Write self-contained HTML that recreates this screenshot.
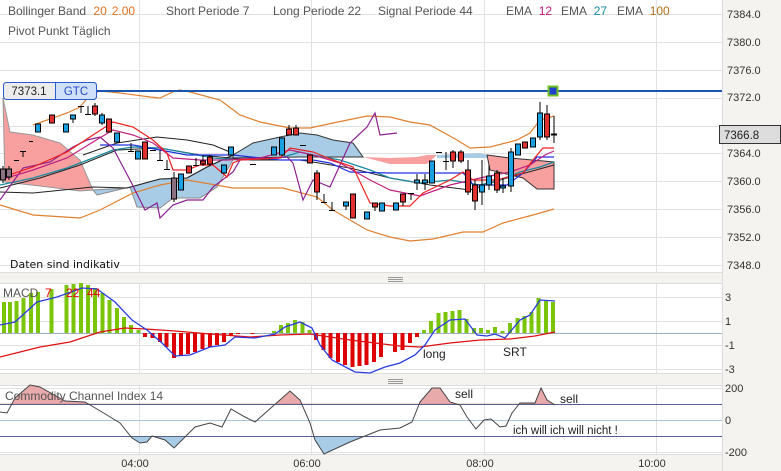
<!DOCTYPE html>
<html><head><meta charset="utf-8"><style>
html,body{margin:0;padding:0;background:#f4f3ef;}
svg{display:block;font-family:"Liberation Sans",sans-serif;}
</style></head><body>
<svg width="781" height="471" viewBox="0 0 781 471" xmlns="http://www.w3.org/2000/svg">
<defs>
<clipPath id="above"><rect x="0" y="384" width="722" height="20"/></clipPath>
<clipPath id="below"><rect x="0" y="436" width="722" height="20"/></clipPath>
</defs>
<rect width="781" height="471" fill="#f4f3ef"/>
<!-- panels -->
<rect x="0" y="0" width="722" height="272" fill="#fff"/>
<rect x="0" y="283" width="722" height="90" fill="#fff"/>
<rect x="0" y="385" width="722" height="69" fill="#fff"/>
<g stroke="#e2e2e2" stroke-width="1">
<line x1="0" x2="722" y1="14.5" y2="14.5"/><line x1="0" x2="722" y1="42.5" y2="42.5"/><line x1="0" x2="722" y1="70.5" y2="70.5"/><line x1="0" x2="722" y1="98.5" y2="98.5"/><line x1="0" x2="722" y1="126.5" y2="126.5"/><line x1="0" x2="722" y1="153.5" y2="153.5"/><line x1="0" x2="722" y1="181.5" y2="181.5"/><line x1="0" x2="722" y1="209.5" y2="209.5"/><line x1="0" x2="722" y1="237.5" y2="237.5"/><line x1="0" x2="722" y1="265.5" y2="265.5"/>
<line x1="0" x2="722" y1="297.5" y2="297.5"/><line x1="0" x2="722" y1="321.5" y2="321.5"/><line x1="0" x2="722" y1="345.5" y2="345.5"/><line x1="0" x2="722" y1="369.5" y2="369.5"/>
<line x1="0" x2="722" y1="388.5" y2="388.5"/><line x1="0" x2="722" y1="452.5" y2="452.5"/>
<line x1="139.5" x2="139.5" y1="0" y2="454"/><line x1="311.5" x2="311.5" y1="0" y2="454"/><line x1="484.5" x2="484.5" y1="0" y2="454"/><line x1="656.5" x2="656.5" y1="0" y2="454"/>
</g>
<rect x="0" y="272" width="722" height="11" fill="#f4f3ef"/>
<rect x="0" y="373" width="722" height="12" fill="#f4f3ef"/>
<line x1="0" x2="722" y1="272.5" y2="272.5" stroke="#ddd"/>
<line x1="0" x2="722" y1="283.5" y2="283.5" stroke="#ddd"/>
<line x1="0" x2="722" y1="373.5" y2="373.5" stroke="#ddd"/>
<line x1="0" x2="722" y1="385.5" y2="385.5" stroke="#ddd"/>
<line x1="0" x2="722" y1="454.5" y2="454.5" stroke="#ddd"/>
<line x1="722.5" x2="722.5" y1="0" y2="471" stroke="#ddd"/>
<g stroke="#999"><line x1="388" x2="403" y1="277.5" y2="277.5"/><line x1="388" x2="403" y1="279.5" y2="279.5"/><line x1="388" x2="403" y1="281.5" y2="281.5"/>
<line x1="388" x2="403" y1="379.5" y2="379.5"/><line x1="388" x2="403" y1="381.5" y2="381.5"/><line x1="388" x2="403" y1="383.5" y2="383.5"/></g>

<!-- clouds -->
<polygon points="3,98 10,132 33,135 60,143 80,160 93,190 80,191 40,186 5,182" fill="#f8a0a0" stroke="#999" stroke-width="1"/>
<polygon points="93,190 127,188 160,179 187,178 207,167 233,155 233,160 217,187 200,198 173,198 160,208 137,207 130,187 97,195" fill="#a8cbe6" stroke="#888" stroke-width="1"/>
<polygon points="233,155 253,143 280,137 300,133 317,135 333,140 353,143 363,157 300,157 233,158" fill="#a8cbe6" stroke="#333" stroke-width="1"/>
<polygon points="363,157 390,158 417,157 427,155 437,155 427,164 417,164 390,164" fill="#f8a0a0"/>
<polygon points="437,155 480,153 487,155 487,158 437,158" fill="#a8cbe6"/>
<polygon points="487,155 510,158 554,162 554,189 537,189 523,178 490,170" fill="#f8a0a0" stroke="#333" stroke-width="1"/>

<!-- bollinger -->
<g fill="none" stroke="#e08030" stroke-width="1.2">
<polyline points="33,125 67,113 80,107 90,95 100,91 120,93 150,97 160,98 175,91 180,90 190,92 220,100 240,115 260,122 290,128 310,128 333,123 367,116 390,117 410,122 430,125 457,140 470,148 490,147 517,140 530,133 540,120 554,116"/>
<polyline points="0,205 33,215 80,218 100,210 133,193 160,185 187,180 233,188 283,188 317,197 333,210 367,230 390,237 410,241 433,239 463,232 483,232 503,223 533,215 554,209"/>
</g>
<!-- black lines -->
<g fill="none" stroke="#222" stroke-width="1">
<polyline points="0,192 33,193 93,187 127,188 160,179 187,178 207,167 233,155"/>
<polyline points="83,155 117,143 157,137 187,140 213,145 230,152"/>
<polyline points="0,188 40,178 80,165 117,150 160,148 200,155 250,160 300,160 350,168 390,178 430,185 470,190 500,180 554,165"/>
</g>
<!-- EMA lines -->
<polyline fill="none" stroke="#1a8aa0" stroke-width="1.3" points="0,185 33,178 67,168 93,158 113,150 133,147 160,148 187,153 213,158 240,160 280,158 300,152 313,155 340,160 370,170 390,178 420,183 450,180 480,185 500,180 520,172 540,167 554,162"/>
<polyline fill="none" stroke="#2030e0" stroke-width="1.2" points="100,145 133,145 160,150 187,155 233,155 280,160 313,160 330,163 350,172 390,173 463,173 470,180 473,185 507,185 523,173 537,157 554,157"/>
<polyline fill="none" stroke="#8a2090" stroke-width="1.2" points="0,200 23,168 50,162 73,147 87,140 100,137 113,148 130,180 145,210 157,203 160,218 173,205 187,200 203,200 213,187 233,172 240,160 287,157 293,163 303,200 313,180 330,187 350,143 367,127 375,113 380,135 397,133"/>
<polyline fill="none" stroke="#c02080" stroke-width="1.2" points="0,180 33,170 67,158 93,142 113,130 133,135 153,143 173,158 200,160 227,160 260,158 290,150 313,155 340,163 370,180 390,190 420,196 450,185 480,178 510,172 530,165 545,155 554,151"/>
<polyline fill="none" stroke="#f02020" stroke-width="1.2" points="0,178 33,167 67,152 93,135 113,122 133,127 153,140 167,153 173,170 187,170 200,165 213,165 227,177 233,163 240,160 280,158 290,148 313,152 333,160 353,167 370,203 390,206 410,206 423,193 450,180 463,172 473,180 497,180 523,173 533,160 543,148 554,148"/>

<!-- candles -->
<g stroke="#000" stroke-width="1">
<line x1="3" x2="3" y1="166" y2="183"/><rect x="0.5" y="169" width="5" height="11" fill="#8a7080"/>
<line x1="9" x2="9" y1="166" y2="180"/><rect x="6.5" y="169" width="5" height="8" fill="#8a7080"/>
<line x1="14" x2="19" y1="160.5" y2="160.5"/>
<line x1="23" x2="23" y1="151" y2="157"/><line x1="20" x2="26" y1="151.5" y2="151.5"/>
<line x1="29" x2="33" y1="141.5" y2="141.5"/>
<rect x="35.5" y="124" width="5" height="8" fill="#1aa0e0"/>
<rect x="49.5" y="115" width="5" height="8" fill="#e03030"/>
<rect x="63.5" y="124" width="5" height="8" fill="#1aa0e0"/>
<line x1="73" x2="73" y1="115" y2="123"/><rect x="70.5" y="115" width="5" height="4" fill="#1aa0e0"/>
<line x1="81" x2="81" y1="106" y2="113"/><line x1="78" x2="84" y1="106.5" y2="106.5"/>
<line x1="88" x2="88" y1="106" y2="114"/><line x1="85" x2="91" y1="114.5" y2="114.5"/>
<line x1="95" x2="95" y1="103" y2="116"/><rect x="92.5" y="106" width="5" height="8" fill="#e03030"/>
<line x1="102" x2="102" y1="113" y2="125"/><rect x="99.5" y="115" width="5" height="8" fill="#1aa0e0"/>
<rect x="106.5" y="119" width="5" height="13" fill="#e03030"/>
<rect x="114.5" y="133" width="5" height="9" fill="#1aa0e0"/>
<line x1="131" x2="131" y1="143" y2="151"/><line x1="128" x2="134" y1="151.5" y2="151.5"/>
<rect x="135.5" y="151" width="5" height="8" fill="#1aa0e0"/>
<rect x="142.5" y="142" width="5" height="17" fill="#e03030"/>
<line x1="150" x2="156" y1="150.5" y2="150.5"/>
<line x1="160" x2="160" y1="150" y2="160"/><line x1="157" x2="163" y1="160.5" y2="160.5"/>
<line x1="167" x2="167" y1="160" y2="169"/><line x1="164" x2="170" y1="169.5" y2="169.5"/>
<line x1="174" x2="174" y1="172" y2="202"/><rect x="171.5" y="178" width="5" height="21" fill="#8a7080"/>
<rect x="178.5" y="174" width="5" height="16" fill="#1aa0e0"/>
<rect x="186.5" y="166" width="5" height="7" fill="#e03030"/>
<line x1="196" x2="196" y1="158" y2="165"/><line x1="193" x2="199" y1="165.5" y2="165.5"/>
<line x1="203" x2="203" y1="155" y2="166"/><rect x="200.5" y="161" width="5" height="3" fill="#e03030"/>
<line x1="210" x2="210" y1="155" y2="166"/><rect x="207.5" y="157" width="5" height="7" fill="#e03030"/>
<rect x="221.5" y="165" width="5" height="8" fill="#1aa0e0"/>
<rect x="228.5" y="147" width="5" height="8" fill="#1aa0e0"/>
<line x1="250" x2="256" y1="164.5" y2="164.5"/>
<rect x="271.5" y="147" width="5" height="8" fill="#1aa0e0"/>
<rect x="279.5" y="138" width="5" height="17" fill="#1aa0e0"/>
<line x1="289" x2="289" y1="125" y2="135"/><rect x="286.5" y="129" width="5" height="6" fill="#e03030"/>
<line x1="296" x2="296" y1="125" y2="135"/><rect x="293.5" y="128" width="5" height="7" fill="#e03030"/>
<line x1="300" x2="306" y1="145.5" y2="145.5"/>
<rect x="307.5" y="155" width="5" height="8" fill="#e03030"/>
<line x1="317" x2="317" y1="170" y2="200"/><rect x="314.5" y="173" width="5" height="19" fill="#e03030"/>
<line x1="324" x2="324" y1="194" y2="202"/><line x1="321" x2="327" y1="202.5" y2="202.5"/>
<line x1="332" x2="332" y1="202" y2="210"/><line x1="329" x2="335" y1="210.5" y2="210.5"/>
<line x1="346" x2="346" y1="202" y2="210"/><rect x="343.5" y="202" width="5" height="4" fill="#1aa0e0"/>
<rect x="350.5" y="194" width="5" height="24" fill="#e03030"/>
<rect x="364.5" y="212" width="5" height="7" fill="#1aa0e0"/>
<line x1="375" x2="375" y1="203" y2="211"/><rect x="372.5" y="203" width="5" height="4" fill="#e03030"/>
<rect x="379.5" y="203" width="5" height="8" fill="#1aa0e0"/>
<rect x="393.5" y="203" width="5" height="7" fill="#1aa0e0"/>
<line x1="403" x2="403" y1="194" y2="206"/><rect x="400.5" y="194" width="5" height="8" fill="#e03030"/>
<line x1="411" x2="411" y1="193" y2="200"/><line x1="408" x2="414" y1="193.5" y2="193.5"/>
<line x1="417" x2="417" y1="174" y2="190"/><rect x="414.5" y="180" width="5" height="3" fill="#1aa0e0"/>
<line x1="425" x2="425" y1="174" y2="190"/><rect x="422.5" y="180" width="5" height="3" fill="#1aa0e0"/>
<rect x="429.5" y="161" width="5" height="22" fill="#1aa0e0"/>
<line x1="436" x2="442" y1="152.5" y2="152.5"/>
<line x1="446" x2="446" y1="152" y2="170"/><line x1="443" x2="449" y1="161.5" y2="161.5"/>
<line x1="453" x2="453" y1="150" y2="168"/><rect x="450.5" y="152" width="5" height="9" fill="#e03030"/>
<line x1="461" x2="461" y1="150" y2="163"/><rect x="458.5" y="152" width="5" height="9" fill="#e03030"/>
<line x1="468" x2="468" y1="160" y2="195"/><rect x="465.5" y="170" width="5" height="22" fill="#e03030"/>
<line x1="475" x2="475" y1="180" y2="210"/><rect x="472.5" y="185" width="5" height="16" fill="#e03030"/>
<line x1="482" x2="482" y1="160" y2="205"/><rect x="479.5" y="185" width="5" height="7" fill="#1aa0e0"/>
<line x1="489" x2="489" y1="165" y2="190"/><rect x="486.5" y="176" width="5" height="9" fill="#1aa0e0"/>
<line x1="497" x2="497" y1="170" y2="193"/><rect x="494.5" y="173" width="5" height="17" fill="#e03030"/>
<line x1="503" x2="503" y1="178" y2="193"/><rect x="500.5" y="186" width="5" height="2" fill="#1aa0e0"/>
<line x1="511" x2="511" y1="148" y2="192"/><rect x="508.5" y="152" width="5" height="34" fill="#1aa0e0"/>
<rect x="515.5" y="144" width="5" height="11" fill="#1aa0e0"/>
<rect x="522.5" y="142" width="5" height="6" fill="#e03030"/>
<rect x="530.5" y="138" width="5" height="9" fill="#1aa0e0"/>
<line x1="540" x2="540" y1="102" y2="140"/><rect x="537.5" y="113" width="5" height="24" fill="#1aa0e0"/>
<line x1="547" x2="547" y1="105" y2="140"/><rect x="544.5" y="114" width="5" height="23" fill="#e03030"/>
<line x1="554" x2="554" y1="116" y2="143"/><line x1="551" x2="557" y1="134.5" y2="134.5" stroke-width="2"/>
</g>

<!-- order line -->
<line x1="97" x2="722" y1="91" y2="91" stroke="#1a56b0" stroke-width="2"/>
<rect x="548.5" y="86.5" width="9" height="9" fill="#2040d0" stroke="#70c020" stroke-width="2"/>
<rect x="3.5" y="82.5" width="93" height="17" rx="3" fill="#ececec" stroke="#2a5cd0"/>
<path d="M55.5 82.5 H93.5 a3 3 0 0 1 3 3 V96.5 a3 3 0 0 1 -3 3 H55.5 Z" fill="#cfe0fa" stroke="#2a5cd0"/>
<text x="29" y="95" font-size="11.5" fill="#222" text-anchor="middle">7373.1</text>
<text x="76" y="95" font-size="11.5" fill="#2a4cc0" text-anchor="middle">GTC</text>

<!-- header text -->
<g font-size="12" fill="#555">
<text x="8" y="15">Bollinger Band <tspan fill="#e07020" dx="4">20</tspan><tspan fill="#e07020" dx="5">2.00</tspan></text>
<text x="166" y="15">Short Periode  7</text>
<text x="273" y="15">Long Periode  22</text>
<text x="378" y="15">Signal Periode  44</text>
<text x="506" y="15">EMA <tspan fill="#c0187a" dx="4">12</tspan></text>
<text x="561" y="15">EMA <tspan fill="#1a8aa0" dx="4">27</tspan></text>
<text x="617" y="15">EMA <tspan fill="#b0701a" dx="4">100</tspan></text>
<text x="8" y="35">Pivot Punkt  Täglich</text>
</g>
<text x="10" y="268" font-size="11" fill="#111" font-family="DejaVu Sans,sans-serif">Daten sind indikativ</text>

<!-- price axis -->
<g font-size="11" fill="#333">
<text x="727" y="18">7384.0</text><text x="727" y="46">7380.0</text><text x="727" y="74">7376.0</text><text x="727" y="101">7372.0</text>
<text x="727" y="157">7364.0</text><text x="727" y="185">7360.0</text><text x="727" y="213">7356.0</text><text x="727" y="241">7352.0</text><text x="727" y="269">7348.0</text>
</g>
<rect x="719.5" y="125.5" width="61" height="18" fill="#ddd" stroke="#333"/>
<text x="724" y="139" font-size="11.5" fill="#222">7366.8</text>

<!-- MACD -->
<line x1="0" x2="722" y1="333.5" y2="333.5" stroke="#9ab0c0"/>
<g fill="#7ac40a">
<rect x="2" y="302" width="4" height="31"/><rect x="8" y="302" width="4" height="31"/><rect x="14.5" y="301" width="4" height="32"/><rect x="21.5" y="298" width="4" height="35"/><rect x="29" y="293" width="4" height="40"/><rect x="36" y="292" width="4" height="41"/><rect x="49.5" y="289" width="4" height="44"/><rect x="64.5" y="285" width="4" height="48"/><rect x="71.5" y="284" width="4" height="49"/><rect x="79" y="283" width="4" height="50"/><rect x="86" y="285" width="4" height="48"/><rect x="93" y="288" width="4" height="45"/><rect x="100.5" y="293" width="4" height="40"/><rect x="107.5" y="300" width="4" height="33"/><rect x="115" y="308" width="4" height="25"/><rect x="122" y="317" width="4" height="16"/><rect x="129" y="325" width="4" height="8"/><rect x="136.5" y="330" width="4" height="3"/>
<rect x="272" y="331" width="4" height="2"/><rect x="279" y="325" width="4" height="8"/><rect x="286" y="323" width="4" height="10"/><rect x="293" y="320" width="4" height="13"/><rect x="300.5" y="322" width="4" height="11"/><rect x="307.5" y="330" width="4" height="3"/>
<rect x="422" y="330" width="4" height="3"/><rect x="429" y="321" width="4" height="12"/><rect x="436.5" y="313" width="4" height="20"/><rect x="443.5" y="312" width="4" height="21"/><rect x="450.5" y="311" width="4" height="22"/><rect x="457.5" y="310" width="4" height="23"/><rect x="464.5" y="319" width="4" height="14"/><rect x="472" y="328" width="4" height="5"/><rect x="479" y="328" width="4" height="5"/><rect x="486" y="330" width="4" height="3"/><rect x="493" y="327" width="4" height="6"/><rect x="500.5" y="331" width="4" height="2"/><rect x="508" y="323" width="4" height="10"/><rect x="515.5" y="318" width="4" height="15"/><rect x="522.5" y="316" width="4" height="17"/><rect x="529.5" y="312" width="4" height="21"/><rect x="536.5" y="298" width="4" height="35"/><rect x="544" y="301" width="4" height="32"/><rect x="551" y="302" width="4" height="31"/>
</g>
<g fill="#dd0000">
<rect x="143" y="333" width="4" height="4"/><rect x="150.5" y="333" width="4" height="5"/><rect x="158" y="333" width="4" height="9"/><rect x="164.5" y="333" width="4" height="14"/><rect x="172" y="333" width="4" height="25"/><rect x="179" y="333" width="4" height="23"/><rect x="186" y="333" width="4" height="21"/><rect x="193" y="333" width="4" height="19"/><rect x="200.5" y="333" width="4" height="16"/><rect x="208" y="333" width="4" height="14"/><rect x="215" y="333" width="4" height="12"/><rect x="222" y="333" width="4" height="9"/><rect x="229" y="333" width="4" height="2"/><rect x="236" y="333" width="4" height="1"/><rect x="250.5" y="333" width="4" height="1"/>
<rect x="314" y="333" width="4" height="7"/><rect x="321.5" y="333" width="4" height="17"/><rect x="328.5" y="333" width="4" height="25"/><rect x="336" y="333" width="4" height="29"/><rect x="343" y="333" width="4" height="32"/><rect x="350.5" y="333" width="4" height="34"/><rect x="357.5" y="333" width="4" height="33"/><rect x="364.5" y="333" width="4" height="32"/><rect x="372" y="333" width="4" height="29"/><rect x="379" y="333" width="4" height="24"/><rect x="393" y="333" width="4" height="19"/><rect x="400.5" y="333" width="4" height="17"/><rect x="408" y="333" width="4" height="10"/><rect x="415" y="333" width="4" height="4"/>
</g>
<polyline fill="none" stroke="#e01010" stroke-width="1.3" points="0,357 40,347 70,342 100,332 125,328 145,329 175,331 210,334 250,337 280,335 310,334 350,340 400,346 420,347 450,343 480,340 510,339 535,336 555,332"/>
<polyline fill="none" stroke="#2a3ee0" stroke-width="1.3" points="0,325 15,322 37,302 57,297 82,288 97,289 115,302 132,320 147,330 162,343 175,356 190,355 210,347 225,345 235,337 255,338 275,334 285,327 300,322 312,328 320,345 332,360 355,372 370,373 385,367 400,363 415,355 425,345 435,330 450,320 465,319 477,335 487,336 495,334 505,338 520,320 530,315 540,300 555,301"/>
<text x="3" y="297" font-size="12" fill="#555">MACD</text>
<g font-size="12" fill="#e00"><text x="45" y="297">7</text><text x="66" y="297">22</text><text x="87" y="297">44</text></g>
<text x="423" y="358" font-size="12" fill="#222">long</text>
<text x="503" y="356" font-size="12" fill="#222">SRT</text>
<g font-size="11" fill="#333"><text x="725" y="301">3</text><text x="725" y="325">1</text><text x="725" y="349">-1</text><text x="725" y="373">-3</text></g>

<!-- CCI -->
<g clip-path="url(#above)"><polygon fill="#e8aaaa" stroke="#c07070" stroke-width="0.5" points="0,404 0,412 7,413 15,398 30,385 40,387 65,401 85,402 102,412 120,423 132,438 140,443 147,442 152,436 165,440 174,448 185,437 195,427 210,423 222,427 231,409 245,417 255,422 272,407 290,391 300,400 310,423 315,440 324,454 350,442 370,434 380,430 400,428 412,422 420,402 432,388 440,388 450,402 460,405 467,417 476,429 484,420 491,419 500,427 506,426 512,413 520,403 535,403 541,388 547,400 555,405 555,404"/></g>
<g clip-path="url(#below)"><polygon fill="#a8cbe6" points="0,436 0,412 7,413 15,398 30,385 40,387 65,401 85,402 102,412 120,423 132,438 140,443 147,442 152,436 165,440 174,448 185,437 195,427 210,423 222,427 231,409 245,417 255,422 272,407 290,391 300,400 310,423 315,440 324,454 350,442 370,434 380,430 400,428 412,422 420,402 432,388 440,388 450,402 460,405 467,417 476,429 484,420 491,419 500,427 506,426 512,413 520,403 535,403 541,388 547,400 555,405 555,436"/></g>
<line x1="0" x2="722" y1="420.5" y2="420.5" stroke="#a8c4d8"/>
<line x1="0" x2="722" y1="404.5" y2="404.5" stroke="#5a6090"/>
<line x1="0" x2="722" y1="436.5" y2="436.5" stroke="#5a6090"/>
<polyline fill="none" stroke="#444" stroke-width="1" points="0,412 7,413 15,398 30,385 40,387 65,401 85,402 102,412 120,423 132,438 140,443 147,442 152,436 165,440 174,448 185,437 195,427 210,423 222,427 231,409 245,417 255,422 272,407 290,391 300,400 310,423 315,440 324,454 350,442 370,434 380,430 400,428 412,422 420,402 432,388 440,388 450,402 460,405 467,417 476,429 484,420 491,419 500,427 506,426 512,413 520,403 535,403 541,388 547,400 555,405"/>
<text x="5" y="400" font-size="12" fill="#555">Commodity Channel Index  14</text>
<text x="455" y="398" font-size="12" fill="#222">sell</text>
<text x="560" y="403" font-size="12" fill="#222">sell</text>
<text x="513" y="434" font-size="11.5" fill="#222">ich will ich will nicht !</text>
<g font-size="11" fill="#333"><text x="725" y="392">200</text><text x="725" y="424">0</text><text x="725" y="456">-200</text></g>

<!-- time axis -->
<g font-size="11" fill="#333" text-anchor="middle"><text x="135" y="467">04:00</text><text x="307" y="467">06:00</text><text x="480" y="467">08:00</text><text x="652" y="467">10:00</text></g>
</svg>
</body></html>
